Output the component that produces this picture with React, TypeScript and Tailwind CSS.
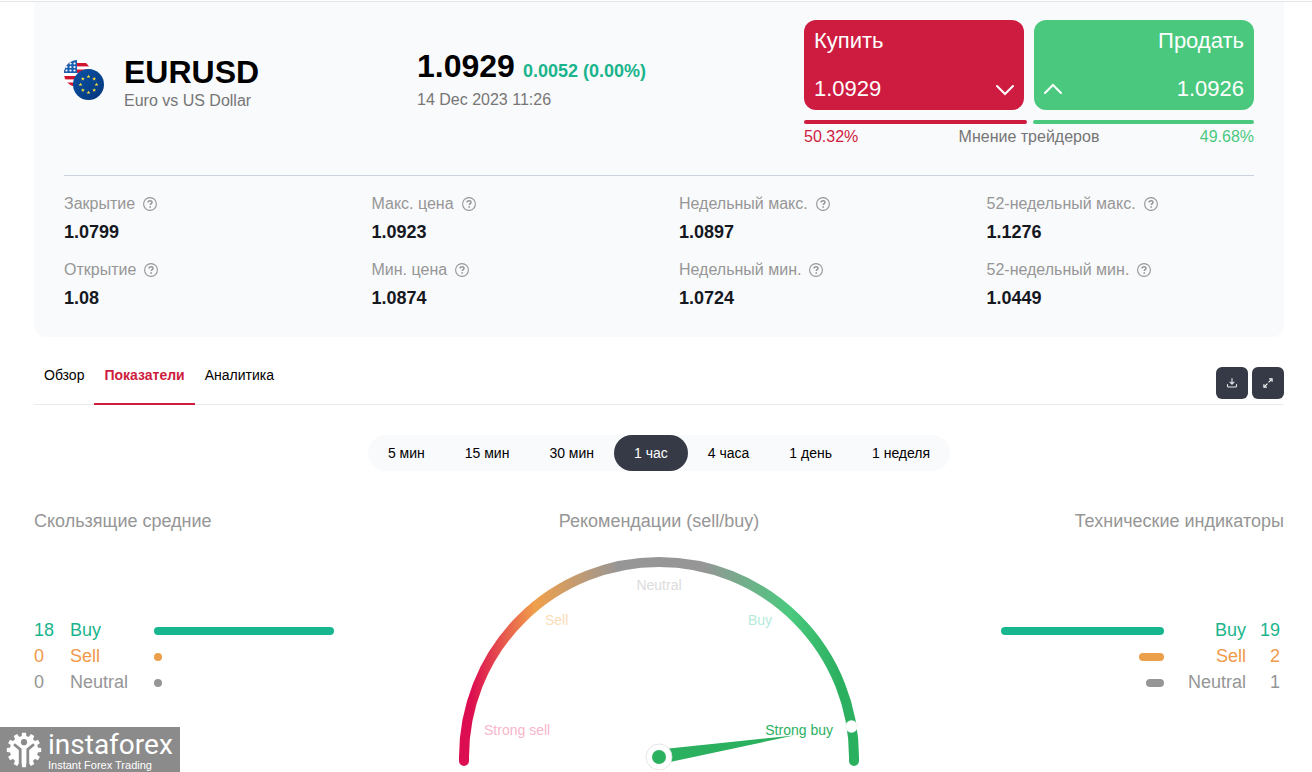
import React from "react";

const stats = [
  { label: "Закрытие", value: "1.0799" },
  { label: "Макс. цена", value: "1.0923" },
  { label: "Недельный макс.", value: "1.0897" },
  { label: "52-недельный макс.", value: "1.1276" },
  { label: "Открытие", value: "1.08" },
  { label: "Мин. цена", value: "1.0874" },
  { label: "Недельный мин.", value: "1.0724" },
  { label: "52-недельный мин.", value: "1.0449" },
];

const periods = ["5 мин", "15 мин", "30 мин", "1 час", "4 часа", "1 день", "1 неделя"];

type Signal = { name: string; count: number; bar: number; text: string; fill: string };

const averages: Signal[] = [
  { name: "Buy", count: 18, bar: 180, text: "text-[#1ab48c]", fill: "bg-[#18b68e]" },
  { name: "Sell", count: 0, bar: 8, text: "text-[#f0994a]", fill: "bg-[#ec9f4b]" },
  { name: "Neutral", count: 0, bar: 8, text: "text-[#969696]", fill: "bg-[#969696]" },
];

const indicators: Signal[] = [
  { name: "Buy", count: 19, bar: 163, text: "text-[#1ab48c]", fill: "bg-[#18b68e]" },
  { name: "Sell", count: 2, bar: 25, text: "text-[#f0994a]", fill: "bg-[#ec9f4b]" },
  { name: "Neutral", count: 1, bar: 18, text: "text-[#969696]", fill: "bg-[#969696]" },
];

function PairFlags() {
  const stars = Array.from({ length: 8 }, (_, i) => {
    const a = (i * Math.PI) / 4;
    return { x: 24.5 + 8 * Math.sin(a), y: 24.5 - 8 * Math.cos(a) };
  });
  return (
    <svg viewBox="0 0 40 40" className="size-10 shrink-0" aria-hidden="true">
      <defs>
        <clipPath id="us">
          <circle cx="13.5" cy="13.5" r="13.5" />
        </clipPath>
        <linearGradient id="eu" x1="0" y1="0" x2="1" y2="1">
          <stop offset="0" stopColor="#0a52a5" />
          <stop offset="1" stopColor="#05367a" />
        </linearGradient>
      </defs>
      <g clipPath="url(#us)">
        <rect width="27" height="27" fill="#fff" />
        {[3, 9.5, 16, 22.5].map((y) => (
          <rect key={y} y={y} width="27" height="3.4" fill="#d0142f" />
        ))}
        <rect width="13" height="13" fill="#1a5fb0" />
        {[3.5, 7, 10.5].map((y) =>
          [2.5, 6.5, 10.5].map((x) => (
            <circle key={`${x}-${y}`} cx={x} cy={y} r="1.1" fill="#fff" />
          ))
        )}
      </g>
      <circle cx="24.5" cy="24.5" r="15.5" fill="url(#eu)" />
      {stars.map((s, i) => (
        <path
          key={i}
          transform={`translate(${s.x} ${s.y})`}
          d="M0-2 .5-.6 1.9-.6.8.3 1.2 1.7 0 .8-1.2 1.7-.8.3-1.9-.6-.5-.6Z"
          fill="#ffe13a"
        />
      ))}
    </svg>
  );
}

function HelpIcon() {
  return (
    <svg viewBox="0 0 14 14" className="size-3.5" fill="none" stroke="#969696" aria-hidden="true">
      <circle cx="7" cy="7" r="6.4" strokeWidth="1.1" />
      <path d="M5 5.6C5 4.4 5.9 3.7 7 3.7s2 .7 2 1.7c0 1.2-1.8 1.3-1.8 2.7" strokeWidth="1.5" />
      <path d="M6.4 10h1.6" strokeWidth="1.5" />
    </svg>
  );
}

function SignalBar({ s, align }: { s: Signal; align: string }) {
  return (
    <td className="w-[180px] p-0">
      <div className={`mt-0.5 h-2 rounded-full ${align} ${s.fill}`} style={{ width: s.bar }} />
    </td>
  );
}

function Gauge() {
  return (
    <svg
      viewBox="0 0 400 215"
      className="mt-5 block h-[215px] w-[400px]"
      role="img"
      aria-label="Strong buy"
    >
      <defs>
        <linearGradient id="arc" gradientUnits="userSpaceOnUse" x1="0" y1="0" x2="400" y2="0">
          <stop offset="0.03" stopColor="#dc0d50" />
          <stop offset="0.19" stopColor="#f0a04b" />
          <stop offset="0.4" stopColor="#969696" />
          <stop offset="0.61" stopColor="#969696" />
          <stop offset="0.83" stopColor="#4ac97e" />
          <stop offset="0.95" stopColor="#2bb060" />
        </linearGradient>
      </defs>
      <path
        d="M5 206V202A195 195 0 0 1 395 202V206"
        fill="none"
        stroke="url(#arc)"
        strokeWidth="10"
        strokeLinecap="round"
      />
      <circle cx="392.5" cy="171.5" r="6" fill="#fff" stroke="#e3e6e5" strokeWidth="0.6" />
      <path d="M210 193.5 335 180.5 211 207Z" fill="#2bb060" />
      <circle cx="200" cy="202" r="13" fill="#fff" stroke="#dedede" strokeWidth="0.8" />
      <circle cx="200" cy="202" r="7" fill="#2bb060" />
      <g className="text-sm">
        <text x="25" y="180" fill="#f8b6cb">Strong sell</text>
        <text x="86" y="70" fill="#fbdcb8">Sell</text>
        <text x="200" y="35" fill="#dcdcdc" textAnchor="middle">Neutral</text>
        <text x="289" y="70" fill="#b4e9dc">Buy</text>
        <text x="374" y="180" fill="#2bb060" textAnchor="end">Strong buy</text>
      </g>
    </svg>
  );
}

function Watermark() {
  const teeth = Array.from({ length: 12 }, (_, i) => i * 30);
  return (
    <div className="fixed bottom-0 left-0 flex h-[45px] w-[180px] items-center bg-[#8b8b8b] pl-1.5 text-white">
      <svg viewBox="0 0 36 36" className="size-9 shrink-0" aria-hidden="true">
        {teeth.map((a) => (
          <path key={a} d="M15.6 5 16 .8h4L20.4 5Z" fill="#fff" transform={`rotate(${a} 18 18)`} />
        ))}
        <circle cx="18" cy="18" r="14" fill="#fff" />
        <circle cx="18" cy="10.2" r="3.1" fill="#8b8b8b" />
        <path
          d="M8 12.2 14.2 17.4V36M28 12.2 21.8 17.4V36"
          fill="none"
          stroke="#8b8b8b"
          strokeWidth="2.8"
          strokeLinejoin="round"
        />
      </svg>
      <div className="ml-1.5 flex flex-col pt-0.5">
        <span className="font-[Roboto,'Liberation_Sans',sans-serif] text-[28px] leading-[29px]">instaforex</span>
        <span className="text-[11px] leading-3">Instant Forex Trading</span>
      </div>
    </div>
  );
}

export default function App() {
  return (
    <div className="bg-white font-['Liberation_Sans',Arial,sans-serif] text-black">
      <div className="h-px" />
      <div className="h-px bg-[#e2e6e6]" />
      <main className="pr-7 pl-[34px]">
        <section className="rounded-b-xl bg-[#f9fafc] px-[30px] pb-[27px]">
          <header className="grid grid-cols-[353fr_387fr_450px] items-start border-b border-[#cbd2e0] pt-[18px] pb-[26px]">
            <div className="flex items-start gap-5 pt-9">
              <div className="pt-1">
                <PairFlags />
              </div>
              <div>
                <h1 className="text-[32px] leading-8 font-bold">EURUSD</h1>
                <p className="mt-px text-base text-[#767676]">Euro vs US Dollar</p>
              </div>
            </div>
            <div className="pt-[30px]">
              <p className="flex h-8 items-baseline gap-2 font-bold">
                <span className="text-[32px] leading-8">1.0929</span>
                <span className="text-lg leading-8 text-[#1ab48c]">0.0052 (0.00%)</span>
              </p>
              <p className="mt-1.5 text-base text-[#767676]">14 Dec 2023 11:26</p>
            </div>
            <div>
              <div className="grid grid-cols-2 gap-2.5 text-[22px] leading-7 text-white">
                <button type="button" className="flex h-[90px] flex-col justify-between rounded-xl bg-[#ce1c40] px-2.5 py-[7px] text-left">
                  <span>Купить</span>
                  <span className="flex w-full items-center justify-between">
                    1.0929
                    <svg viewBox="0 0 18 14" className="h-3.5 w-[18px]" fill="none" stroke="#fff" strokeWidth="2" strokeLinecap="round" aria-hidden="true">
                      <path d="M1 4 9 12 17 4" />
                    </svg>
                  </span>
                </button>
                <button type="button" className="flex h-[90px] flex-col items-end justify-between rounded-xl bg-[#4ac97e] px-2.5 py-[7px]">
                  <span>Продать</span>
                  <span className="flex w-full items-center justify-between">
                    <svg viewBox="0 0 18 14" className="h-3.5 w-[18px]" fill="none" stroke="#fff" strokeWidth="2" strokeLinecap="round" aria-hidden="true">
                      <path d="M1 11 9 3 17 11" />
                    </svg>
                    1.0926
                  </span>
                </button>
              </div>
              <div className="mt-2.5 flex gap-1.5">
                <div className="h-1 grow-[5032] rounded-full bg-[#ce1c40]" />
                <div className="h-1 grow-[4968] rounded-full bg-[#4ac97e]" />
              </div>
              <div className="mt-px flex justify-between text-base text-[#767676]">
                <span className="text-[#ce1c40]">50.32%</span>
                <span>Мнение трейдеров</span>
                <span className="text-[#4ac97e]">49.68%</span>
              </div>
            </div>
          </header>
          <dl className="grid grid-cols-4 gap-x-10 gap-y-3.5 pt-4">
            {stats.map((s) => (
              <div key={s.label}>
                <dt className="flex items-center gap-2 text-base whitespace-nowrap text-[#969696]">
                  {s.label}
                  <HelpIcon />
                </dt>
                <dd className="mt-1 text-lg leading-6 font-bold text-[#16181f]">{s.value}</dd>
              </div>
            ))}
          </dl>
        </section>

        <div className="mt-7 flex items-start justify-between border-b border-[#e8ebed]">
          <nav className="-mb-px flex text-sm">
            <a href="#overview" className="h-10 px-2.5">Обзор</a>
            <a href="#indicators" aria-current="page" className="h-10 border-b-2 border-[#ce1c40] px-2.5 font-bold text-[#ce1c40]">Показатели</a>
            <a href="#analytics" className="h-10 px-2.5">Аналитика</a>
          </nav>
          <div className="mt-0.5 flex gap-1">
            <button type="button" aria-label="Скачать" className="flex size-8 items-center justify-center rounded-md bg-[#363946]">
              <svg viewBox="0 0 12 12" className="size-3" fill="none" stroke="#e8e9ec" strokeWidth="1.1" strokeLinecap="round" strokeLinejoin="round" aria-hidden="true">
                <path d="M6 1.5V7M4 5.2 6 7.2 8 5.2M1.5 7.5V9a1 1 0 0 0 1 1h7a1 1 0 0 0 1-1V7.5" />
              </svg>
            </button>
            <button type="button" aria-label="На весь экран" className="flex size-8 items-center justify-center rounded-md bg-[#363946]">
              <svg viewBox="0 0 12 12" className="size-3" fill="none" stroke="#fff" strokeWidth="1.1" aria-hidden="true">
                <path d="M2.5 9.5 9.5 2.5" strokeDasharray="4.2 1.5" />
                <path d="M7.2 1.9H10.1V4.8M1.9 7.2V10.1H4.8" />
              </svg>
            </button>
          </div>
        </div>

        <div className="mt-[30px] flex justify-center">
          <div className="flex rounded-[18px] bg-[#f9fafc] text-sm">
            {periods.map((p) => (
              <button
                key={p}
                type="button"
                aria-pressed={p === "1 час"}
                className={p === "1 час" ? "h-9 rounded-[18px] bg-[#363946] px-5 text-white" : "h-9 rounded-[18px] px-5"}
              >
                {p}
              </button>
            ))}
          </div>
        </div>

        <section className="mt-9 grid grid-cols-[1fr_400px_1fr] text-lg">
          <div>
            <h2 className="text-[#969696]">Скользящие средние</h2>
            <table className="mt-[82px] border-collapse">
              <tbody>
                {averages.map((s) => (
                  <tr key={s.name} className={`h-[26px] leading-[26px] ${s.text}`}>
                    <td className="w-9 p-0">{s.count}</td>
                    <th scope="row" className="w-[84px] p-0 text-left font-normal">{s.name}</th>
                    <SignalBar s={s} align="mr-auto" />
                  </tr>
                ))}
              </tbody>
            </table>
          </div>
          <div className="flex flex-col items-center">
            <h2 className="text-[#969696]">Рекомендации (sell/buy)</h2>
            <Gauge />
          </div>
          <div className="flex flex-col items-end">
            <h2 className="text-[#969696]">Технические индикаторы</h2>
            <table className="mt-[82px] mr-1 border-collapse text-right">
              <tbody>
                {indicators.map((s) => (
                  <tr key={s.name} className={`h-[26px] leading-[26px] ${s.text}`}>
                    <SignalBar s={s} align="ml-auto" />
                    <th scope="row" className="w-[82px] p-0 text-right font-normal">{s.name}</th>
                    <td className="w-[34px] p-0">{s.count}</td>
                  </tr>
                ))}
              </tbody>
            </table>
          </div>
        </section>
      </main>
      <Watermark />
    </div>
  );
}
